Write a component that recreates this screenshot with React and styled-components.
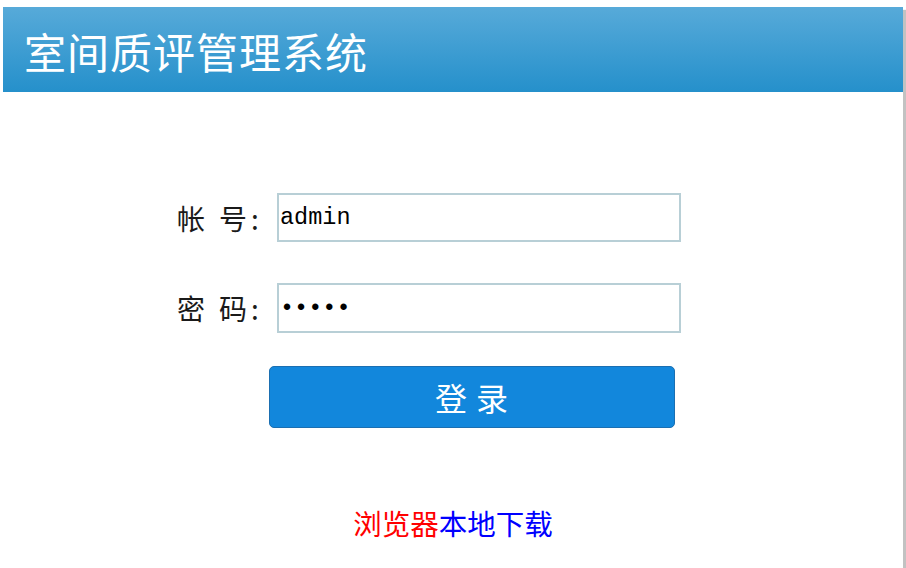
import React from "react";
import styled, { createGlobalStyle } from "styled-components";

const GlobalStyle = createGlobalStyle`
  html, body {
    margin: 0;
    padding: 0;
    background: #ffffff;
  }
  body {
    font-family: "Noto Sans CJK SC", "Liberation Sans", sans-serif;
  }
`;

const Page = styled.div`
  margin: 7px 0 0 3px;
  width: 900px;
  height: 561px;
  background: #ffffff;
  box-shadow: 3px 3px 1px #c2c2c2;
`;

const Header = styled.header`
  height: 85px;
  display: flex;
  align-items: center;
  padding-left: 21px;
  background: linear-gradient(to bottom, #57aad9, #2590cb);
`;

const Title = styled.h1`
  margin: 2px 0 0;
  font-size: 42px;
  font-weight: 400;
  line-height: 1;
  color: #ffffff;
  letter-spacing: 1px;
`;

const Main = styled.main`
  display: flex;
  flex-direction: column;
  padding-top: 101px;
`;

const Form = styled.form`
  display: flex;
  flex-direction: column;
  gap: 41px;
  padding-left: 174px;
`;

const Row = styled.div`
  display: flex;
  align-items: center;
`;

const Label = styled.label`
  width: 100px;
  font-size: 28px;
  line-height: 1;
  color: #1a1a1a;
  white-space: pre;
`;

const Colon = styled.span`
  margin-left: 4px;
`;

const Input = styled.input`
  box-sizing: border-box;
  width: 404px;
  height: ${(p) => p.$h}px;
  border: 2px solid #b8cfd6;
  padding: 0 1px;
  font-family: "Liberation Mono", monospace;
  font-size: 23.5px;
  color: #000;
  outline: none;
  background: #fff;
`;

const Button = styled.button`
  box-sizing: border-box;
  margin: -8px 0 0 92px;
  width: 406px;
  height: 62px;
  border: 1px solid #1b6fb1;
  border-radius: 5px;
  background: #1287dc;
  color: #ffffff;
  font-family: "Noto Sans CJK SC", sans-serif;
  font-size: 32px;
  line-height: 1;
  letter-spacing: 1px;
  cursor: pointer;
  padding: 0;
`;

const Links = styled.div`
  margin-top: 79px;
  text-align: center;
  font-size: 28.5px;
  line-height: 32px;
`;

const Link = styled.a`
  color: ${(p) => p.$color};
  text-decoration: none;
`;

export default function App() {
  return (
    <>
      <GlobalStyle />
      <Page>
        <Header>
          <Title>室间质评管理系统</Title>
        </Header>
        <Main>
          <Form onSubmit={(e) => e.preventDefault()}>
            <Row>
              <Label>
                帐{"\u2002"}号<Colon>:</Colon>
              </Label>
              <Input $h={49} type="text" defaultValue="admin" />
            </Row>
            <Row>
              <Label>
                密{"\u2002"}码<Colon>:</Colon>
              </Label>
              <Input $h={50} type="password" defaultValue="12345" />
            </Row>
            <Row>
              <Button type="submit">登 录</Button>
            </Row>
          </Form>
          <Links>
            <Link $color="#ff0000" href="#">浏览器</Link>
            <Link $color="#0000ff" href="#">本地下载</Link>
          </Links>
        </Main>
      </Page>
    </>
  );
}
